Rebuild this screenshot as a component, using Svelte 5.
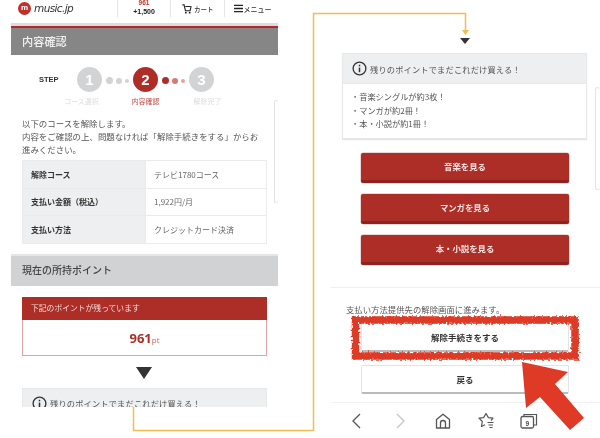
<script>
  const steps = [
    { n: 1, label: 'コース選択', cls: 'first' },
    { n: 2, label: '内容確認', cls: '' },
    { n: 3, label: '解除完了', cls: 'last' }
  ];
  const rows = [
    ['解除コース', 'テレビ1780コース'],
    ['支払い金額（税込）', '1,922円/月'],
    ['支払い方法', 'クレジットカード決済']
  ];
  const buttons = ['音楽を見る', 'マンガを見る', '本・小説を見る'];
  const perks = ['・音楽シングルが約3枚！', '・マンガが約2冊！', '・本・小説が約1冊！'];
</script>

{#snippet infoHead()}
  <div class="info-head">
    <svg class="info-icon" viewBox="0 0 16 16" width="15" height="15">
      <circle cx="8" cy="8" r="6.8" fill="none" stroke="#333" stroke-width="1.4" />
      <rect x="7.2" y="7" width="1.6" height="5" fill="#333" />
      <rect x="7.2" y="4" width="1.6" height="1.7" fill="#333" />
    </svg>
    <span>残りのポイントでまだこれだけ買える！</span>
  </div>
{/snippet}

<div class="page">
  <section class="left">
    <header class="topbar">
      <div class="logo">
        <span class="logo-mark">m</span>
        <span class="logo-text">music.jp</span>
      </div>
      <div class="top-cell points"><b>961</b><span>+1,500</span></div>
      <div class="top-cell">
        <svg viewBox="0 0 12 12" width="10" height="10">
          <path d="M0.5 1h2l1.6 7h5.6l1.3-5.500M4 3h6" fill="none" stroke="#222" stroke-width="1.3" />
          <circle cx="4.6" cy="10.4" r="1.1" fill="#222" />
          <circle cx="9.2" cy="10.4" r="1.1" fill="#222" />
        </svg>
        <span>カート</span>
      </div>
      <div class="top-cell menu">
        <svg viewBox="0 0 10 10" width="9" height="9">
          <path d="M0 1.5h10M0 5h10M0 8.5h10" stroke="#222" stroke-width="1.6" />
        </svg>
        <span>メニュー</span>
      </div>
    </header>

    <div class="title-dark"><h2>内容確認</h2></div>

    <div class="stepper">
      <div class="step-word">STEP</div>
      {#each steps as s, i}
        <div class="step {s.cls}" class:on={s.n === 2}>
          <div class="circle">{s.n}</div>
          <div class="step-label">{s.label}</div>
        </div>
        {#if i < 2}
          <div class="dots" class:red={i === 1}><i></i><i></i><i></i></div>
        {/if}
      {/each}
    </div>

    <p class="lead">
      以下のコースを解除します。<br />内容をご確認の上、問題なければ「解除手続きをする」からお<br />進みください。
    </p>

    <table>
      <tbody>
        {#each rows as r}
          <tr><th>{r[0]}</th><td>{r[1]}</td></tr>
        {/each}
      </tbody>
    </table>

    <div class="title-light"><h2>現在の所持ポイント</h2></div>

    <div class="remain">
      <div class="remain-head">下記のポイントが残っています</div>
      <div class="remain-body"><b>961</b><span>pt</span></div>
    </div>

    <div class="tri big"></div>

    <div class="info clipped">
      {@render infoHead()}
    </div>
  </section>

  <section class="right">
    <div class="tri small"></div>

    <div class="info">
      {@render infoHead()}
      <ul>
        {#each perks as p}<li>{p}</li>{/each}
      </ul>
    </div>

    <div class="red-buttons">
      {#each buttons as b}
        <div class="btn-red">{b}</div>
      {/each}
    </div>

    <div class="lower">
      <p class="note">支払い方法提供先の解除画面に進みます。</p>
      <div class="btn-white first">解除手続きをする</div>
      <div class="btn-white">戻る</div>
    </div>

    <nav class="toolbar">
      <svg viewBox="0 0 20 20" width="20" height="20"><path d="M13 3 6 10l7 7" fill="none" stroke="#555" stroke-width="1.3" /></svg>
      <svg viewBox="0 0 20 20" width="20" height="20"><path d="m7 3 7 7-7 7" fill="none" stroke="#c4c4c4" stroke-width="1.3" /></svg>
      <svg viewBox="0 0 20 20" width="20" height="20">
        <path d="M3.500 17V8.500L10 3.200l6.500 5.300V17z" fill="none" stroke="#555" stroke-width="1.3" stroke-linejoin="round" />
        <path d="M7.500 17v-5a2.500 2.500 0 0 1 5 0v5" fill="none" stroke="#555" stroke-width="1.3" />
      </svg>
      <svg viewBox="0 0 20 20" width="20" height="20">
        <path d="M15 9.500l2-2.300-4.600-.6L10 2.500 7.600 6.600 3 7.200l3.300 3.300-.8 5 3.500-1.800" fill="none" stroke="#555" stroke-width="1.2" stroke-linejoin="round" />
        <path d="M11.500 11.500h6M12.500 14h4.500M13.500 16.500h3" stroke="#555" stroke-width="1.1" />
      </svg>
      <svg viewBox="0 0 20 20" width="20" height="20">
        <rect x="2" y="5.500" width="12.500" height="11.500" rx="1.500" fill="none" stroke="#555" stroke-width="1.3" />
        <path d="M5 5.500V3.500h12.500v10.500h-3" fill="none" stroke="#555" stroke-width="1.2" />
        <text x="8.200" y="14.500" text-anchor="middle" class="tab-num">9</text>
      </svg>
    </nav>
  </section>

  <!-- annotations drawn over the two screenshots -->
  <svg class="overlay" viewBox="0 0 600 438" width="600" height="438">
    <path d="M133.500 407V430.500H313.500V13.500H465.500V30" fill="none" stroke="#f2bd4e" stroke-width="1.5" />
    <path d="M462 30h7l-3.500 5z" fill="#f2bd4e" />
    <defs>
      <filter id="rough" x="-5%" y="-15%" width="110%" height="130%">
        <feTurbulence type="fractalNoise" baseFrequency="0.5" numOctaves="2" seed="4" />
        <feDisplacementMap in="SourceGraphic" scale="5" />
      </filter>
    </defs>
    <rect x="355.500" y="320" width="219.500" height="36" fill="none" stroke="#de3a26" stroke-width="7.500" filter="url(#rough)" />
    <path d="M522 362 568 372 555 384 584 418 570 430 540 397 526 408Z" fill="#de3a26" />
  </svg>

  <div class="side-card left-side"></div>
  <div class="side-card right-side"></div>
</div>

<style>
  :global(body) {
    margin: 0;
    background: #fff;
  }
  .page {
    position: relative;
    display: flex;
    width: 600px;
    height: 438px;
    overflow: hidden;
    background: #fff;
    color: #555;
    font-family: "Noto Sans CJK JP", "Noto Sans", sans-serif;
    filter: blur(0.45px);
  }
  h2 { margin: 0; font-size: 11.2px; font-weight: 500; }
  p { margin: 0; }

  /* left phone */
  .left {
    width: 278px;
    height: 407px;
    margin-right: 53px;
    overflow: hidden;
    flex: none;
  }
  .topbar {
    display: flex;
    height: 17px;
    margin-bottom: 6px;
    align-items: center;
  }
  .logo {
    display: flex;
    align-items: center;
    gap: 3px;
    width: 117px;
    padding-left: 18px;
    box-sizing: border-box;
  }
  .logo-mark {
    width: 13px;
    height: 13px;
    border-radius: 50%;
    background: #c0302a;
    color: #fff;
    font: 700 8px/12px "Liberation Sans", sans-serif;
    text-align: center;
  }
  .logo-text {
    font: italic 400 10.5px/13px "DejaVu Sans", sans-serif;
    letter-spacing: -0.6px;
    color: #333;
  }
  .top-cell {
    display: flex;
    align-items: center;
    justify-content: center;
    gap: 2px;
    width: 54px;
    height: 17px;
    border-left: 1px solid #e6e6e6;
    box-sizing: border-box;
    font-size: 6.5px;
    font-weight: 500;
    color: #333;
  }
  .menu { gap: 1px; font-size: 7px; padding-left: 2px; }
  .points {
    flex-direction: column;
    gap: 0;
    font: 700 7px/8px "Liberation Sans", sans-serif;
    color: #222;
  }
  .points b { color: #c0302a; margin-top: -3px; font-size: 6.5px; }
  .points span { margin-top: 1px; }
  .title-dark {
    margin-left: 11px;
    height: 29px;
    padding-left: 11px;
    display: flex;
    align-items: center;
    background: #868686;
    border-top: 3px solid #dcdcdc;
    box-shadow: inset 0 2px 0 #b3272a;
    color: #f1f1f1;
    box-sizing: content-box;
  }
  .stepper {
    display: flex;
    height: 45px;
    margin-top: 12px;
    margin-left: 39px;
    align-items: flex-start;
  }
  .step-word {
    width: 38px;
    font: 700 7.5px/25px "Liberation Sans", sans-serif;
    color: #333;
  }
  .step {
    position: relative;
    width: 25px;
  }
  .circle {
    width: 25px;
    height: 25px;
    border-radius: 50%;
    background: #d2d3d5;
    color: #fff;
    font: 700 15px/25px "Liberation Sans", sans-serif;
    text-align: center;
  }
  .on .circle { background: #b02d27; }
  .step-label {
    position: absolute;
    top: 29px;
    left: -15px;
    width: 55px;
    text-align: center;
    font-size: 7px;
    line-height: 10px;
    color: #dcdddf;
  }
  .first .step-label { left: -23px; }
  .last .step-label { left: -9px; }
  .on .step-label { color: #bf4a45; }
  .dots {
    display: flex;
    align-items: center;
    gap: 3px;
    width: 31px;
    padding-left: 4px;
    box-sizing: border-box;
    height: 25px;
    margin-top: 1px;
  }
  .dots i { border-radius: 50%; background: #d2d3d5; display: block; }
  .dots i:nth-child(1) { width: 7px; height: 7px; }
  .dots i:nth-child(2) { width: 6px; height: 6px; }
  .dots i:nth-child(3) { width: 4px; height: 4px; }
  .dots.red i:nth-child(1) { background: #b02d27; }
  .dots.red i:nth-child(2) { background: #d27c78; }
  .dots.red i:nth-child(3) { background: #e0a5a2; }
  .lead {
    margin: 5px 0 4px 22px;
    font-size: 8.45px;
    line-height: 13px;
    white-space: nowrap;
    color: #555;
  }
  table {
    width: 245px;
    margin-left: 22px;
    border-collapse: collapse;
    font-size: 8px;
    table-layout: fixed;
  }
  th, td {
    height: 26.5px;
    padding: 0 0 0 8px;
    border: 1px solid #e9ebed;
    text-align: left;
  }
  th {
    width: 114px;
    background: #eeeff1;
    color: #333;
    font-weight: 700;
  }
  td { color: #666; }
  .title-light {
    margin: 10px 0 0 11px;
    height: 32px;
    padding-left: 11px;
    display: flex;
    align-items: center;
    background: #d1d2d4;
    border-top: 2px solid #e6e6e6;
    box-sizing: border-box;
    color: #444;
  }
  .title-light h2 { font-size: 10px; margin-top: -2px; }
  .remain {
    width: 245px;
    margin: 11px 0 0 22px;
    box-sizing: border-box;
    border: 1px solid #e0a5a2;
  }
  .remain-head {
    margin: -1px -1px 0;
    height: 23px;
    padding-left: 9px;
    background: #ad2d27;
    color: #f3dcda;
    font-size: 7.8px;
    line-height: 22px;
  }
  .remain-body {
    height: 35px;
    text-align: center;
    line-height: 32px;
    color: #ad2d27;
  }
  .remain-body b { font: 700 13px/32px "Open Sans", sans-serif; }
  .remain-body span { font: 400 8px/32px "Open Sans", sans-serif; color: #c9605b; }
  .tri {
    width: 0;
    height: 0;
    border-style: solid;
    border-color: #333 transparent transparent;
  }
  .tri.big {
    margin: 11px 0 9px 136px;
    border-width: 12px 8.5px 0;
  }
  .info {
    width: 245px;
    box-sizing: border-box;
    border: 1px solid #e6e8ea;
    background: #fff;
  }
  .clipped { margin-left: 22px; }
  .info-head {
    display: flex;
    align-items: center;
    gap: 3px;
    height: 29px;
    padding-left: 9px;
    background: #eeeff1;
    border-bottom: 1px solid #e6e8ea;
    font-size: 8.2px;
    color: #555;
    letter-spacing: 0.2px;
  }
  .info-icon { flex: none; }

  /* right phone */
  .right {
    position: relative;
    width: 269px;
    height: 438px;
    flex: none;
    display: flex;
    flex-direction: column;
    overflow: hidden;
  }
  .tri.small {
    margin: 38px 0 9px 129px;
    border-width: 6px 5px 0;
  }
  .right .info {
    margin-left: 11px;
    height: 86px;
    box-shadow: 0 1px 1px #e4e4e4;
  }
  ul {
    list-style: none;
    margin: 6px 0 0;
    padding-left: 8px;
    font-size: 8.2px;
    line-height: 13.5px;
    color: #555;
  }
  .red-buttons {
    display: flex;
    flex-direction: column;
    gap: 11px;
    margin: 14px 0 0 30px;
    width: 208px;
  }
  .btn-red {
    height: 30px;
    box-sizing: border-box;
    border-radius: 2px;
    background: #ad2d27;
    border-bottom: 3px solid #8d2320;
    box-shadow: 0 0 0 0.5px #d8b4b2;
    color: #f7e6e5;
    font-size: 8.4px;
    font-weight: 700;
    line-height: 27px;
    text-align: center;
  }
  .lower {
    margin-top: 22px;
    border-top: 1px solid #edeff0;
    padding: 15px 0 0 30px;
    height: 116px;
    box-sizing: border-box;
    border-bottom: 1px solid #f0f1f2;
  }
  .note {
    font-size: 8.4px;
    line-height: 12px;
    color: #555;
    white-space: nowrap;
    margin-left: -15px;
  }
  .btn-white {
    width: 208px;
    height: 29px;
    box-sizing: border-box;
    border: 1px solid #e2e3e4;
    border-bottom: 2px solid #b9bbbd;
    border-radius: 2px;
    background: #fff;
    color: #333;
    font-size: 8.5px;
    font-weight: 700;
    line-height: 26px;
    text-align: center;
  }
  .btn-white.first { margin: 8px 0 13px; }
  .toolbar {
    display: flex;
    gap: 23px;
    padding: 8px 0 0 16px;
  }
  .tab-num {
    font: 700 6.5px "Liberation Sans", sans-serif;
    fill: #444;
  }

  /* overlays */
  .overlay {
    position: absolute;
    top: 0;
    left: 0;
  }
  .side-card {
    position: absolute;
    height: 103px;
    background: #fff;
    border: 1px solid #e3e4e6;
    border-radius: 4px;
    box-sizing: border-box;
  }
  .left-side { left: 274px; top: 100px; border-right: 0; width: 4px; }
  .right-side { left: 595px; top: 87px; border-right: 0; width: 5px; }
</style>
